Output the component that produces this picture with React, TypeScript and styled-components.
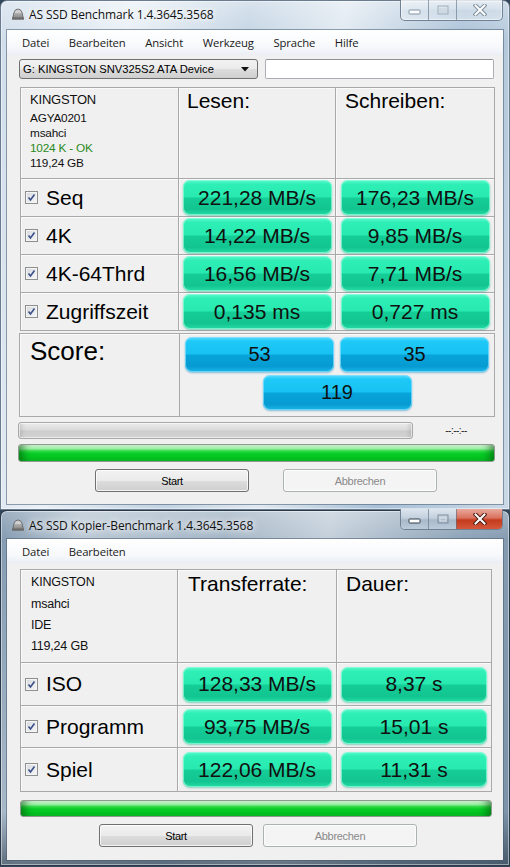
import React from "react";
import styled, { createGlobalStyle } from "styled-components";

const GlobalStyle = createGlobalStyle`
  html, body {
    margin: 0;
    padding: 0;
    background: #33465a;
  }
  body {
    font-family: "Liberation Sans", Arial, sans-serif;
  }
`;

const inactiveGlass = `
  linear-gradient(to bottom, rgba(255,255,255,0.35), rgba(255,255,255,0) 40px),
  linear-gradient(100deg, #cfdcea 0%, #e9f0f6 22%, #c2d3e3 42%, #e0e9f1 58%, #a8c0d7 78%, #cbd9e6 100%)
`;
const activeGlass = `
  linear-gradient(to bottom, rgba(255,255,255,0.25), rgba(255,255,255,0) 30px, rgba(0,0,0,0) 85%, rgba(30,45,60,0.55)),
  linear-gradient(100deg, #7f97ae 0%, #b9c7d4 14%, #a3b5c6 40%, #c3cfda 58%, #8ca2b7 82%, #7a91a7 100%)
`;

const Page = styled.div`
  width: 510px;
  height: 867px;
  overflow: hidden;
  display: flex;
  flex-direction: column;
  background: #33465a;
`;

const Window = styled.div<{ $active?: boolean; $height: number }>`
  height: ${(p) => p.$height}px;
  flex-shrink: 0;
  box-sizing: border-box;
  display: flex;
  flex-direction: column;
  padding: 0 6px 5px 6px;
  border: 1px solid ${(p) => (p.$active ? "#2a3a4a" : "#6a7c8e")};
  border-radius: 7px 7px 0 0;
  background: ${(p) => (p.$active ? activeGlass : inactiveGlass)};
  box-shadow: inset 0 0 0 1px rgba(255, 255, 255, 0.45);
`;

const TitleBar = styled.div<{ $height: number }>`
  height: ${(p) => p.$height}px;
  flex-shrink: 0;
  display: flex;
  align-items: flex-start;
`;

const TitleLeft = styled.div<{ $top: number }>`
  display: flex;
  align-items: center;
  gap: 4px;
  margin-left: 4px;
  margin-top: ${(p) => p.$top}px;
  height: 16px;
`;

const TitleText = styled.span`
  font-family: "Open Sans", "Noto Sans", sans-serif;
  font-size: 12px;
  letter-spacing: -0.1px;
  color: #111;
  text-shadow: 0 0 6px #fff, 0 0 10px rgba(255, 255, 255, 0.9);
  white-space: nowrap;
`;

const CaptionGroup = styled.div<{ $top: number }>`
  margin-left: auto;
  margin-top: ${(p) => p.$top}px;
  display: flex;
  height: 20px;
  border: 1px solid #6f8193;
  border-top: none;
  border-radius: 0 0 5px 5px;
  overflow: hidden;
  box-shadow: inset 0 0 0 1px rgba(255, 255, 255, 0.5);
`;

const CaptionButton = styled.div<{ $w: number; $kind: "plain" | "active" | "close" }>`
  width: ${(p) => p.$w}px;
  display: flex;
  align-items: center;
  justify-content: center;
  border-left: 1px solid rgba(90, 110, 130, 0.6);
  &:first-child {
    border-left: none;
  }
  background: ${(p) =>
    p.$kind === "close"
      ? "linear-gradient(to bottom, #e9a99c 0%, #d9715c 45%, #c43a1d 55%, #d4583c 100%)"
      : p.$kind === "active"
      ? "linear-gradient(to bottom, #dde5ee 0%, #c3d0dd 45%, #a9b9ca 55%, #bccbda 100%)"
      : "linear-gradient(to bottom, rgba(255,255,255,0.55), rgba(255,255,255,0.25) 50%, rgba(255,255,255,0.15) 51%, rgba(255,255,255,0.35))"};
`;

const Client = styled.div`
  flex: 1;
  display: flex;
  flex-direction: column;
  background: #f0f0f0;
  box-shadow: 0 0 0 1px rgba(70, 90, 110, 0.55);
`;

const MenuBar = styled.div<{ $height: number }>`
  height: ${(p) => p.$height}px;
  flex-shrink: 0;
  display: flex;
  align-items: center;
  gap: 19.5px;
  padding-left: 15px;
  background: linear-gradient(to bottom, #ffffff, #f7f9fc 65%, #ebeff5);
  font-family: "Open Sans", "Noto Sans", sans-serif;
  font-size: 11.3px;
  letter-spacing: -0.1px;
  color: #1a1a1a;
`;

const MenuItem = styled.span`
  white-space: nowrap;
`;

const Body = styled.div`
  display: flex;
  flex-direction: column;
  padding: 0 8px 0 11px;
`;

const ComboRow = styled.div`
  display: flex;
  gap: 7px;
  margin: 4px 0 0 1px;
  height: 20px;
`;

const Combo = styled.div`
  width: 239px;
  box-sizing: border-box;
  display: flex;
  align-items: center;
  padding: 0 8px 0 3px;
  border: 1px solid #707070;
  border-radius: 3px;
  background: linear-gradient(to bottom, #f2f2f2 0%, #ebebeb 50%, #dddddd 51%, #cfcfcf 100%);
  font-size: 11.2px;
  color: #000;
  white-space: nowrap;
`;

const ComboText = styled.span`
  flex: 1;
`;

const TextBox = styled.div`
  width: 229px;
  box-sizing: border-box;
  border: 1px solid #abadb3;
  border-top-color: #8e9297;
  border-radius: 2px;
  background: #fff;
`;

const ResultTable = styled.div<{ $cols: string; $rows: string; $left: number; $top: number }>`
  display: grid;
  grid-template-columns: ${(p) => p.$cols};
  grid-template-rows: ${(p) => p.$rows};
  margin: ${(p) => p.$top}px 0 0 ${(p) => p.$left}px;
  align-self: flex-start;
  border-top: 1px solid #a9a9a9;
  border-left: 1px solid #a9a9a9;
`;

const Cell = styled.div`
  box-sizing: border-box;
  border-right: 1px solid #a9a9a9;
  border-bottom: 1px solid #a9a9a9;
  box-shadow: inset 1px 1px 0 #fafafa;
  min-width: 0;
`;

const InfoCell = styled(Cell)<{ $pad: string }>`
  padding: ${(p) => p.$pad};
  display: flex;
  flex-direction: column;
`;

const InfoLine = styled.span<{ $size: number; $lh: number; $green?: boolean }>`
  font-size: ${(p) => p.$size}px;
  line-height: ${(p) => p.$lh}px;
  color: ${(p) => (p.$green ? "#2a8a22" : "#111")};
  letter-spacing: -0.2px;
  white-space: nowrap;
`;

const HeadCell = styled(Cell)<{ $pad: string }>`
  padding: ${(p) => p.$pad};
  font-size: 21px;
  line-height: 24px;
  color: #000;
`;

const LabelCell = styled(Cell)`
  display: flex;
  align-items: center;
  gap: 8px;
  padding-left: 4px;
  font-size: 21px;
  color: #000;
  white-space: nowrap;
`;

const Check = styled.span`
  width: 13px;
  height: 13px;
  box-sizing: border-box;
  flex-shrink: 0;
  display: flex;
  align-items: center;
  justify-content: center;
  border: 1px solid #8e8f8f;
  background: linear-gradient(135deg, #d6d9dd, #f6f7f8);
  box-shadow: inset 0 0 0 1px #f4f4f4;
`;

const ValueCell = styled(Cell)`
  display: flex;
  align-items: center;
  justify-content: center;
`;

const ValueBox = styled.div<{ $tone: "green" | "blue"; $w?: number; $size?: number }>`
  width: ${(p) => p.$w ?? 149}px;
  height: 35px;
  box-sizing: border-box;
  display: flex;
  align-items: center;
  justify-content: center;
  border-radius: 7px;
  font-size: ${(p) => p.$size ?? 21}px;
  color: #101010;
  white-space: nowrap;
  background: ${(p) =>
    p.$tone === "green"
      ? "linear-gradient(to bottom, #5ff8cf 0%, #2ef0b6 12%, #28eab0 48%, #15cd97 52%, #12c590 84%, #25dca6 100%)"
      : "linear-gradient(to bottom, #5fdcff 0%, #1ec9f7 12%, #18c2f2 48%, #08a4d9 52%, #069bd2 84%, #1ab6e8 100%)"};
  box-shadow: ${(p) =>
    p.$tone === "green"
      ? "inset 0 0 0 1px rgba(150, 255, 220, 0.7), 0 1px 2px rgba(0, 160, 120, 0.45)"
      : "inset 0 0 0 1px rgba(140, 225, 255, 0.7), 0 1px 2px rgba(0, 120, 180, 0.45)"};
`;

const ScorePanel = styled.div`
  margin: 2px 0 0 1px;
  width: 476px;
  height: 84px;
  box-sizing: border-box;
  display: grid;
  grid-template-columns: 160px 1fr;
  border: 1px solid #a9a9a9;
  box-shadow: inset 1px 1px 0 #fafafa;
`;

const ScoreLabel = styled.div`
  border-right: 1px solid #a9a9a9;
  padding: 2px 0 0 10px;
  font-size: 26px;
  line-height: 30px;
  color: #000;
`;

const ScoreGrid = styled.div`
  display: grid;
  grid-template-columns: 149px 149px;
  column-gap: 6px;
  row-gap: 3px;
  padding: 3px 0 0 5px;
  align-content: start;
`;

const ScoreTotal = styled.div`
  grid-column: 1 / span 2;
  display: flex;
  justify-content: center;
`;

const ProgressRow = styled.div`
  display: flex;
  align-items: center;
  margin-top: 5px;
  height: 17px;
`;

const Progress = styled.div`
  width: 395px;
  height: 17px;
  box-sizing: border-box;
  border: 1px solid #a8a8a8;
  border-radius: 3px;
  background: linear-gradient(to bottom, #ececec 0%, #dadada 45%, #cdcdcd 55%, #d3d3d3 100%);
  box-shadow: inset 0 0 0 1px rgba(255, 255, 255, 0.6), inset 6px 0 5px -4px rgba(0, 0, 0, 0.15),
    inset -6px 0 5px -4px rgba(0, 0, 0, 0.15);
`;

const TimeText = styled.span`
  flex: 1;
  text-align: center;
  font-size: 10px;
  letter-spacing: -0.5px;
  color: #222;
  padding-left: 4px;
`;

const GreenBar = styled.div<{ $top: number; $w: number; $left: number; $h: number }>`
  margin: ${(p) => p.$top}px 0 0 ${(p) => p.$left}px;
  width: ${(p) => p.$w}px;
  height: ${(p) => p.$h}px;
  box-sizing: border-box;
  border: 1px solid #8e9a8e;
  border-radius: 3px;
  background: linear-gradient(to bottom, #d6fbd9 0%, #9ff0a8 22%, #2fd944 38%, #06cc25 55%, #04c321 80%, #0bbd28 100%);
  box-shadow: inset 10px 0 8px -6px rgba(0, 70, 10, 0.55), inset -10px 0 8px -6px rgba(0, 70, 10, 0.55);
`;

const ButtonRow = styled.div<{ $left: number; $gap: number }>`
  display: flex;
  gap: ${(p) => p.$gap}px;
  margin: 7px 0 0 ${(p) => p.$left}px;
`;

const Button = styled.div<{ $disabled?: boolean }>`
  width: 154px;
  height: 23px;
  box-sizing: border-box;
  display: flex;
  align-items: center;
  justify-content: center;
  border-radius: 3px;
  font-size: 11px;
  letter-spacing: -0.3px;
  border: 1px solid ${(p) => (p.$disabled ? "#adb2b5" : "#707070")};
  color: ${(p) => (p.$disabled ? "#8a8a8a" : "#000")};
  background: ${(p) =>
    p.$disabled
      ? "#f4f4f4"
      : "linear-gradient(to bottom, #f2f2f2 0%, #ebebeb 50%, #dddddd 51%, #cfcfcf 100%)"};
  box-shadow: inset 0 0 0 1px rgba(255, 255, 255, 0.75);
`;

const AppIcon = () => (
  <svg width="14" height="12" viewBox="0 0 14 12">
    <defs>
      <linearGradient id="drv" x1="0" y1="0" x2="0" y2="1">
        <stop offset="0" stopColor="#d8d8d8" />
        <stop offset="1" stopColor="#7b7b7b" />
      </linearGradient>
    </defs>
    <path d="M1.5 11 L3 4.5 Q4 1 7 1 Q10 1 11 4.5 L12.5 11 Z" fill="url(#drv)" stroke="#5a5a5a" strokeWidth="0.8" />
    <rect x="1" y="9.5" width="12" height="2" fill="#6a6a6a" />
    <path d="M4 4 L10 4" stroke="#eee" strokeWidth="0.8" />
  </svg>
);

const MinGlyph = ({ faded }: { faded?: boolean }) => (
  <svg width="13" height="10" viewBox="0 0 13 10">
    <rect x="1" y="5" width="11" height="4" rx="0.5" fill={faded ? "#fafcff" : "#fff"} stroke={faded ? "#8494a4" : "#33404d"} strokeWidth="1" />
  </svg>
);

const MaxGlyph = ({ faded }: { faded?: boolean }) => (
  <svg width="12" height="11" viewBox="0 0 12 11">
    <rect x="1" y="1" width="10" height="8" fill="none" stroke={faded ? "#9fadbb" : "#7e8e9e"} strokeWidth="1" />
    <rect x="3" y="4" width="6" height="3" fill="none" stroke={faded ? "#c9d3dc" : "#d9e0e8"} strokeWidth="1" />
  </svg>
);

const CloseGlyph = ({ faded }: { faded?: boolean }) => (
  <svg width="14" height="12" viewBox="0 0 14 12">
    <path d="M2.5 1.5 L11.5 10.5 M11.5 1.5 L2.5 10.5" stroke={faded ? "#7f8e9c" : "#4a1a10"} strokeWidth="4" strokeLinecap="square" />
    <path d="M2.5 1.5 L11.5 10.5 M11.5 1.5 L2.5 10.5" stroke="#fff" strokeWidth="2" strokeLinecap="square" />
  </svg>
);

const CheckMark = () => (
  <svg width="9" height="9" viewBox="0 0 9 9">
    <path d="M1.5 4.5 L3.5 7 L7.5 1.5" fill="none" stroke="#3a4f8a" strokeWidth="1.6" />
  </svg>
);

const ComboArrow = () => (
  <svg width="8" height="5" viewBox="0 0 8 5">
    <path d="M0 0 L8 0 L4 4.5 Z" fill="#111" />
  </svg>
);

const CheckLabel = ({ text }: { text: string }) => (
  <LabelCell>
    <Check>
      <CheckMark />
    </Check>
    {text}
  </LabelCell>
);

const benchRows = [
  { name: "Seq", read: "221,28 MB/s", write: "176,23 MB/s" },
  { name: "4K", read: "14,22 MB/s", write: "9,85 MB/s" },
  { name: "4K-64Thrd", read: "16,56 MB/s", write: "7,71 MB/s" },
  { name: "Zugriffszeit", read: "0,135 ms", write: "0,727 ms" },
];

const copyRows = [
  { name: "ISO", rate: "128,33 MB/s", time: "8,37 s" },
  { name: "Programm", rate: "93,75 MB/s", time: "15,01 s" },
  { name: "Spiel", rate: "122,06 MB/s", time: "11,31 s" },
];

const App = () => {
  return (
    <Page>
      <GlobalStyle />
      <Window $height={510}>
        <TitleBar $height={29}>
          <TitleLeft $top={5}>
            <AppIcon />
            <TitleText>AS SSD Benchmark 1.4.3645.3568</TitleText>
          </TitleLeft>
          <CaptionGroup $top={-1}>
            <CaptionButton $w={27} $kind="plain">
              <MinGlyph faded />
            </CaptionButton>
            <CaptionButton $w={27} $kind="plain">
              <MaxGlyph faded />
            </CaptionButton>
            <CaptionButton $w={45} $kind="plain">
              <CloseGlyph faded />
            </CaptionButton>
          </CaptionGroup>
        </TitleBar>
        <Client>
          <MenuBar $height={25}>
            <MenuItem>Datei</MenuItem>
            <MenuItem>Bearbeiten</MenuItem>
            <MenuItem>Ansicht</MenuItem>
            <MenuItem>Werkzeug</MenuItem>
            <MenuItem>Sprache</MenuItem>
            <MenuItem>Hilfe</MenuItem>
          </MenuBar>
          <Body>
            <ComboRow>
              <Combo>
                <ComboText>G: KINGSTON SNV325S2 ATA Device</ComboText>
                <ComboArrow />
              </Combo>
              <TextBox />
            </ComboRow>
            <ResultTable $cols="158px 157px 159px" $rows="91px 38px 38px 38px 38px" $left={2} $top={8}>
              <InfoCell $pad="1px 0 0 9px">
                <InfoLine $size={13} $lh={22}>KINGSTON</InfoLine>
                <InfoLine $size={11.8} $lh={15}>AGYA0201</InfoLine>
                <InfoLine $size={11.8} $lh={15}>msahci</InfoLine>
                <InfoLine $size={11.8} $lh={15} $green>1024 K - OK</InfoLine>
                <InfoLine $size={11.8} $lh={15}>119,24 GB</InfoLine>
              </InfoCell>
              <HeadCell $pad="1px 0 0 8px">Lesen:</HeadCell>
              <HeadCell $pad="1px 0 0 9px">Schreiben:</HeadCell>
              {benchRows.map((r) => (
                <React.Fragment key={r.name}>
                  <CheckLabel text={r.name} />
                  <ValueCell>
                    <ValueBox $tone="green">{r.read}</ValueBox>
                  </ValueCell>
                  <ValueCell>
                    <ValueBox $tone="green">{r.write}</ValueBox>
                  </ValueCell>
                </React.Fragment>
              ))}
            </ResultTable>
            <ScorePanel>
              <ScoreLabel>Score:</ScoreLabel>
              <ScoreGrid>
                <ValueBox $tone="blue" $size={20}>53</ValueBox>
                <ValueBox $tone="blue" $size={20}>35</ValueBox>
                <ScoreTotal>
                  <ValueBox $tone="blue" $size={20}>119</ValueBox>
                </ScoreTotal>
              </ScoreGrid>
            </ScorePanel>
            <ProgressRow>
              <Progress />
              <TimeText>--:--:--</TimeText>
            </ProgressRow>
            <GreenBar $top={5} $left={0} $w={477} $h={18} />
            <ButtonRow $left={77} $gap={34}>
              <Button>Start</Button>
              <Button $disabled>Abbrechen</Button>
            </ButtonRow>
          </Body>
        </Client>
      </Window>

      <Window $active $height={356}>
        <TitleBar $height={28}>
          <TitleLeft $top={6}>
            <AppIcon />
            <TitleText>AS SSD Kopier-Benchmark 1.4.3645.3568</TitleText>
          </TitleLeft>
          <CaptionGroup $top={-2}>
            <CaptionButton $w={27} $kind="active">
              <MinGlyph />
            </CaptionButton>
            <CaptionButton $w={27} $kind="active">
              <MaxGlyph />
            </CaptionButton>
            <CaptionButton $w={45} $kind="close">
              <CloseGlyph />
            </CaptionButton>
          </CaptionGroup>
        </TitleBar>
        <Client>
          <MenuBar $height={24}>
            <MenuItem>Datei</MenuItem>
            <MenuItem>Bearbeiten</MenuItem>
          </MenuBar>
          <Body>
            <ResultTable $cols="157px 159px 155px" $rows="93px 43px 42px 44px" $left={2} $top={6}>
              <InfoCell $pad="1px 0 0 10px">
                <InfoLine $size={12.5} $lh={22}>KINGSTON</InfoLine>
                <InfoLine $size={12.5} $lh={22}>msahci</InfoLine>
                <InfoLine $size={12.5} $lh={21}>IDE</InfoLine>
                <InfoLine $size={12.5} $lh={20}>119,24 GB</InfoLine>
              </InfoCell>
              <HeadCell $pad="2px 0 0 10px">Transferrate:</HeadCell>
              <HeadCell $pad="2px 0 0 9px">Dauer:</HeadCell>
              {copyRows.map((r) => (
                <React.Fragment key={r.name}>
                  <CheckLabel text={r.name} />
                  <ValueCell>
                    <ValueBox $tone="green">{r.rate}</ValueBox>
                  </ValueCell>
                  <ValueCell>
                    <ValueBox $tone="green" $w={146}>
                      {r.time}
                    </ValueBox>
                  </ValueCell>
                </React.Fragment>
              ))}
            </ResultTable>
            <GreenBar $top={8} $left={2} $w={472} $h={17} />
            <ButtonRow $left={81} $gap={10}>
              <Button>Start</Button>
              <Button $disabled>Abbrechen</Button>
            </ButtonRow>
          </Body>
        </Client>
      </Window>
    </Page>
  );
};

export default App;
